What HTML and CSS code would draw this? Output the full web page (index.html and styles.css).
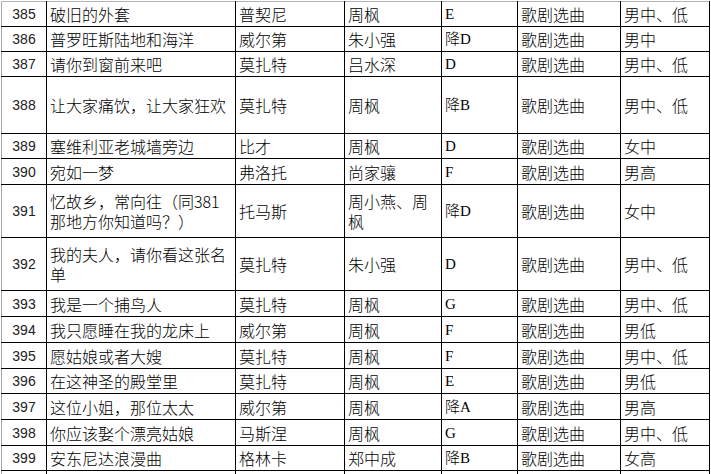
FILE: index.html
```html
<!DOCTYPE html>
<html lang="zh-CN">
<head>
<meta charset="utf-8">
<title>歌剧选曲</title>
<link rel="stylesheet" href="styles.css">
</head>
<body>
<table class="sheet">
  <colgroup>
    <col class="c-no"><col class="c-title"><col class="c-comp"><col class="c-tr"><col class="c-key"><col class="c-genre"><col class="c-voice">
  </colgroup>
  <tbody>
    <tr class="h25 first"><td class="no">385</td><td>破旧的外套</td><td>普契尼</td><td>周枫</td><td class="key">E</td><td>歌剧选曲</td><td>男中、低</td></tr>
    <tr class="h25"><td class="no">386</td><td>普罗旺斯陆地和海洋</td><td>威尔第</td><td>朱小强</td><td class="key">降D</td><td>歌剧选曲</td><td>男中</td></tr>
    <tr class="h25"><td class="no">387</td><td>请你到窗前来吧</td><td>莫扎特</td><td>吕水深</td><td class="key">D</td><td>歌剧选曲</td><td>男中、低</td></tr>
    <tr class="h57"><td class="no">388</td><td>让大家痛饮，让大家狂欢</td><td>莫扎特</td><td>周枫</td><td class="key">降B</td><td>歌剧选曲</td><td>男中、低</td></tr>
    <tr class="h25"><td class="no">389</td><td>塞维利亚老城墙旁边</td><td>比才</td><td>周枫</td><td class="key">D</td><td>歌剧选曲</td><td>女中</td></tr>
    <tr class="h26"><td class="no">390</td><td>宛如一梦</td><td>弗洛托</td><td>尚家骧</td><td class="key">F</td><td>歌剧选曲</td><td>男高</td></tr>
    <tr class="h53"><td class="no">391</td><td>忆故乡，常向往（同381那地方你知道吗？）</td><td>托马斯</td><td>周小燕、周枫</td><td class="key">降D</td><td>歌剧选曲</td><td>女中</td></tr>
    <tr class="h53"><td class="no">392</td><td>我的夫人，请你看这张名单</td><td>莫扎特</td><td>朱小强</td><td class="key">D</td><td>歌剧选曲</td><td>男中、低</td></tr>
    <tr class="h26"><td class="no">393</td><td>我是一个捕鸟人</td><td>莫扎特</td><td>周枫</td><td class="key">G</td><td>歌剧选曲</td><td>男中、低</td></tr>
    <tr class="h26"><td class="no">394</td><td>我只愿睡在我的龙床上</td><td>威尔第</td><td>周枫</td><td class="key">F</td><td>歌剧选曲</td><td>男低</td></tr>
    <tr class="h26"><td class="no">395</td><td>愿姑娘或者大嫂</td><td>莫扎特</td><td>周枫</td><td class="key">F</td><td>歌剧选曲</td><td>男中、低</td></tr>
    <tr class="h25"><td class="no">396</td><td>在这神圣的殿堂里</td><td>莫扎特</td><td>周枫</td><td class="key">E</td><td>歌剧选曲</td><td>男低</td></tr>
    <tr class="h26"><td class="no">397</td><td>这位小姐，那位太太</td><td>威尔第</td><td>周枫</td><td class="key">降A</td><td>歌剧选曲</td><td>男高</td></tr>
    <tr class="h26"><td class="no">398</td><td>你应该娶个漂亮姑娘</td><td>马斯涅</td><td>周枫</td><td class="key">G</td><td>歌剧选曲</td><td>男中、低</td></tr>
    <tr class="h25"><td class="no">399</td><td>安东尼达浪漫曲</td><td>格林卡</td><td>郑中成</td><td class="key">降B</td><td>歌剧选曲</td><td>女高</td></tr>
    <tr class="h25"><td class="no"></td><td></td><td></td><td></td><td class="key"></td><td></td><td></td></tr>
  </tbody>
</table>
</body>
</html>
```
FILE: styles.css
```css
html, body {
  margin: 0;
  padding: 0;
  background: #ffffff;
  overflow: hidden;
}
body {
  padding: 1px 0 0 1px;
  font-family: "Noto Sans CJK SC", "Liberation Sans", sans-serif;
  font-size: 16px;
  color: #000;
}
.sheet {
  border-collapse: collapse;
  table-layout: fixed;
  width: 709px;
  border-left: 1px solid #a8a8a8;
}
.c-no { width: 45px; }
.c-title { width: 189px; }
.c-comp { width: 109px; }
.c-tr { width: 97px; }
.c-key { width: 76px; }
.c-genre { width: 103px; }
.c-voice { width: 89px; }

.sheet td {
  border: 1px solid #000;
  padding: 0 2px 0 3px;
  vertical-align: middle;
  line-height: 20px;
  font-weight: 300;
  white-space: normal;
  word-break: break-all;
}
.sheet td:first-child { border-left-color: #a8a8a8; }
.sheet tr.first td { border-top-color: #b4b4b4; }

.sheet td.no {
  text-align: center;
  padding: 0;
  font-family: "Liberation Sans", "Noto Sans CJK SC", sans-serif;
  font-size: 14px;
  font-weight: 400;
  color: #222;
}
.sheet td.key {
  font-family: "Liberation Serif", "Noto Sans CJK SC", serif;
  font-size: 15px;
}
.h25 { height: 25px; }
.h26 { height: 26px; }
.h53 { height: 53px; }
.h57 { height: 57px; }
```
